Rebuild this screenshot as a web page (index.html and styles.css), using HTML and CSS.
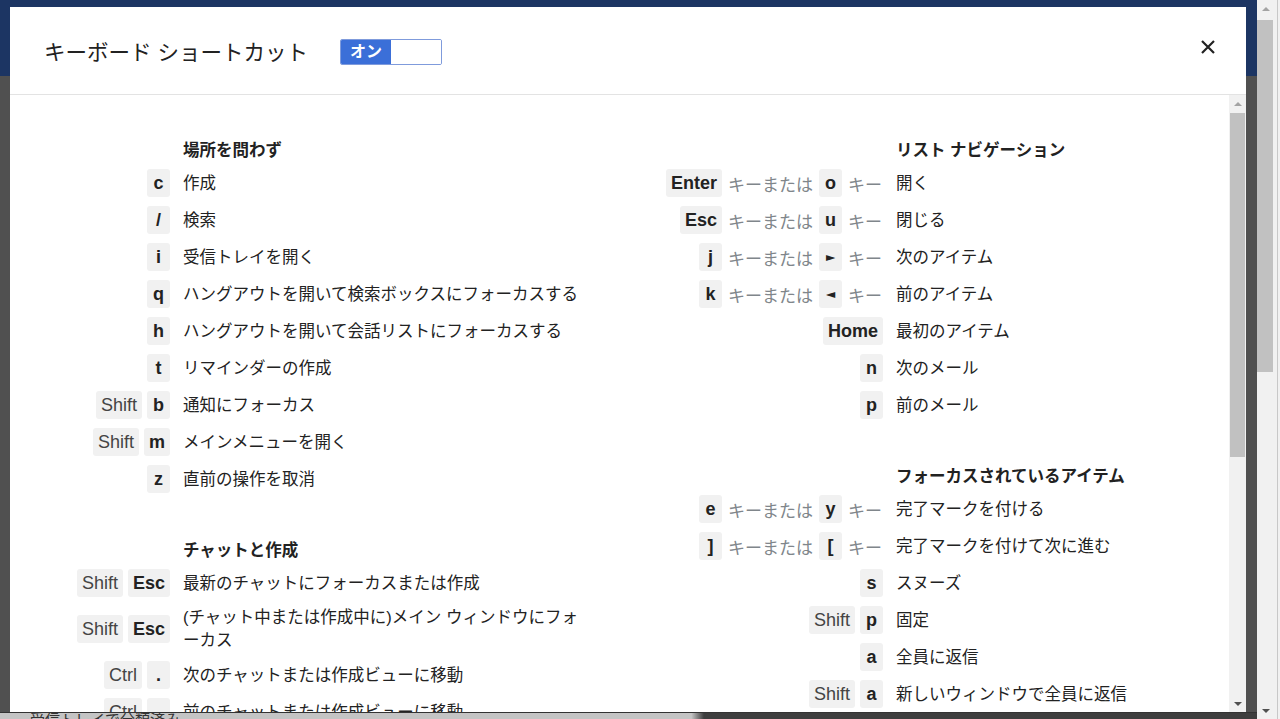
FILE: index.html
```html
<!DOCTYPE html>
<html lang="ja">
  <head>
    <meta charset="UTF-8" />
    <meta name="viewport" content="width=device-width, initial-scale=1.0" />
    <title>キーボード ショートカット</title>
    <link rel="stylesheet" href="styles.css">
  </head>
  <body>
    <!-- page behind the dialog -->
    <div class="page">
      <div class="page-top"></div>
      <div class="page-main"></div>
      <div class="page-foot"><span>受信トレイで分類済み</span></div>
    </div>
    <div class="scrollbar page-scroll">
      <div class="sb-btn"><span class="arrow-up"></span></div>
      <div class="sb-thumb page-thumb"></div>
      <div class="sb-track"></div>
      <div class="sb-btn"><span class="arrow-down"></span></div>
    </div>
    <div class="page-edge"></div>

    <div class="dialog">
      <div class="dialog-header">
        <h1>キーボード ショートカット</h1>
        <div class="toggle">
          <span class="toggle-on">オン</span>
          <span class="toggle-off"></span>
        </div>
        <button class="close" aria-label="閉じる">
          <svg width="16" height="16" viewBox="0 0 16 16">
            <path d="M2 2L14 14M14 2L2 14" stroke="#222" stroke-width="2.2" fill="none" />
          </svg>
        </button>
      </div>

      <div class="dialog-body">
        <div class="content">
          <!-- Left column -->
          <div class="column col-left">
            <div class="section">
              <h2>場所を問わず</h2>
              <div class="rows">
                <div class="keys"><kbd>c</kbd></div>
                <div class="desc">作成</div>
                <div class="keys"><kbd>/</kbd></div>
                <div class="desc">検索</div>
                <div class="keys"><kbd>i</kbd></div>
                <div class="desc">受信トレイを開く</div>
                <div class="keys"><kbd>q</kbd></div>
                <div class="desc">ハングアウトを開いて検索ボックスにフォーカスする</div>
                <div class="keys"><kbd>h</kbd></div>
                <div class="desc">ハングアウトを開いて会話リストにフォーカスする</div>
                <div class="keys"><kbd>t</kbd></div>
                <div class="desc">リマインダーの作成</div>
                <div class="keys"><kbd class="mod">Shift</kbd><kbd>b</kbd></div>
                <div class="desc">通知にフォーカス</div>
                <div class="keys"><kbd class="mod">Shift</kbd><kbd>m</kbd></div>
                <div class="desc">メインメニューを開く</div>
                <div class="keys"><kbd>z</kbd></div>
                <div class="desc">直前の操作を取消</div>
              </div>
            </div>

            <div class="section">
              <h2>チャットと作成</h2>
              <div class="rows">
                <div class="keys"><kbd class="mod">Shift</kbd><kbd>Esc</kbd></div>
                <div class="desc">最新のチャットにフォーカスまたは作成</div>
                <div class="keys"><kbd class="mod">Shift</kbd><kbd>Esc</kbd></div>
                <div class="desc">(チャット中または作成中に)メイン ウィンドウにフォーカス</div>
                <div class="keys"><kbd class="mod">Ctrl</kbd><kbd>.</kbd></div>
                <div class="desc">次のチャットまたは作成ビューに移動</div>
                <div class="keys"><kbd class="mod">Ctrl</kbd><kbd>,</kbd></div>
                <div class="desc">前のチャットまたは作成ビューに移動</div>
              </div>
            </div>
          </div>

          <!-- Right column -->
          <div class="column col-right">
            <div class="section">
              <h2>リスト ナビゲーション</h2>
              <div class="rows">
                <div class="keys"><kbd>Enter</kbd><span class="or">キーまたは</span><kbd>o</kbd><span class="or">キー</span></div>
                <div class="desc">開く</div>
                <div class="keys"><kbd>Esc</kbd><span class="or">キーまたは</span><kbd>u</kbd><span class="or">キー</span></div>
                <div class="desc">閉じる</div>
                <div class="keys"><kbd>j</kbd><span class="or">キーまたは</span><kbd class="arrow">&#9658;</kbd><span class="or">キー</span></div>
                <div class="desc">次のアイテム</div>
                <div class="keys"><kbd>k</kbd><span class="or">キーまたは</span><kbd class="arrow">&#9668;</kbd><span class="or">キー</span></div>
                <div class="desc">前のアイテム</div>
                <div class="keys"><kbd>Home</kbd></div>
                <div class="desc">最初のアイテム</div>
                <div class="keys"><kbd>n</kbd></div>
                <div class="desc">次のメール</div>
                <div class="keys"><kbd>p</kbd></div>
                <div class="desc">前のメール</div>
              </div>
            </div>

            <div class="section">
              <h2>フォーカスされているアイテム</h2>
              <div class="rows">
                <div class="keys"><kbd>e</kbd><span class="or">キーまたは</span><kbd>y</kbd><span class="or">キー</span></div>
                <div class="desc">完了マークを付ける</div>
                <div class="keys"><kbd>]</kbd><span class="or">キーまたは</span><kbd>[</kbd><span class="or">キー</span></div>
                <div class="desc">完了マークを付けて次に進む</div>
                <div class="keys"><kbd>s</kbd></div>
                <div class="desc">スヌーズ</div>
                <div class="keys"><kbd class="mod">Shift</kbd><kbd>p</kbd></div>
                <div class="desc">固定</div>
                <div class="keys"><kbd>a</kbd></div>
                <div class="desc">全員に返信</div>
                <div class="keys"><kbd class="mod">Shift</kbd><kbd>a</kbd></div>
                <div class="desc">新しいウィンドウで全員に返信</div>
              </div>
            </div>
          </div>
        </div>

        <div class="scrollbar dialog-scroll">
          <div class="sb-btn"><span class="arrow-up"></span></div>
          <div class="sb-thumb dialog-thumb"></div>
          <div class="sb-track"></div>
          <div class="sb-btn"><span class="arrow-down"></span></div>
        </div>
      </div>
    </div>
  </body>
</html>
```

FILE: styles.css
```css
* {
  margin: 0;
  padding: 0;
  box-sizing: border-box;
}

body {
  display: flex;
  height: 719px;
  overflow: hidden;
  background: #505050;
  font-family: "Liberation Sans", "Noto Sans CJK JP", sans-serif;
  color: #222;
}

/* page behind the overlay */
.page {
  flex: 1;
  display: flex;
  flex-direction: column;
}

.page-top {
  height: 76px;
  background: #1c3563;
}

.page-main {
  flex: 1;
  background: #505050;
}

.page-foot {
  height: 7px;
  overflow: hidden;
  background: linear-gradient(to right, #c4c4c4 0, #c4c4c4 55%, #3e3e3e 56%);
  border-top: 1px solid #333;
  font-size: 15px;
  line-height: 14px;
  color: #333;
  padding-left: 30px;
}

.page-edge {
  width: 6px;
  background: #f1f1f1;
  border-left: 3px solid #f1f1f1;
  box-shadow: inset 1px 0 0 #c8c8c8;
}

/* scrollbars */
.scrollbar {
  width: 17px;
  display: flex;
  flex-direction: column;
  background: #f1f1f1;
}

.sb-btn {
  height: 17px;
  display: flex;
  align-items: center;
  justify-content: center;
}

.sb-thumb {
  background: #c1c1c1;
}

.sb-track {
  flex: 1;
}

.arrow-up {
  width: 0;
  height: 0;
  border-left: 4px solid transparent;
  border-right: 4px solid transparent;
  border-bottom: 4px solid #a3a3a3;
}

.arrow-down {
  width: 0;
  height: 0;
  border-left: 4px solid transparent;
  border-right: 4px solid transparent;
  border-top: 4px solid #505050;
}

.page-thumb {
  height: 352px;
  margin: 3px 1px 0 0;
}

.dialog-thumb {
  height: 344px;
  margin: 1px 1px 0 1px;
}

/* dialog */
.dialog {
  position: absolute;
  left: 10px;
  top: 7px;
  width: 1236px;
  height: 705px;
  background: #fff;
  display: flex;
  flex-direction: column;
}

.dialog-header {
  height: 88px;
  flex-shrink: 0;
  display: flex;
  align-items: center;
  padding: 0 30px 0 34px;
  border-bottom: 1px solid #e3e3e3;
}

.dialog-header h1 {
  font-size: 21.5px;
  font-weight: normal;
  color: #222;
}

.toggle {
  display: flex;
  height: 26px;
  margin: 3px 0 0 32px;
  border: 1px solid #7f9bdc;
  border-radius: 2px;
  overflow: hidden;
}

.toggle-on {
  width: 50px;
  background: #3b6fd8;
  color: #fff;
  font-size: 16px;
  font-weight: bold;
  line-height: 24px;
  text-align: center;
}

.toggle-off {
  width: 50px;
  background: #fff;
}

.close {
  margin-left: auto;
  margin-bottom: 7px;
  width: 16px;
  height: 16px;
  border: none;
  background: none;
  cursor: pointer;
  display: flex;
}

.dialog-body {
  flex: 1;
  display: flex;
  min-height: 0;
}

.content {
  flex: 1;
  display: flex;
  overflow: hidden;
  padding: 44px 0 0 30px;
}

.col-left {
  width: 600px;
}

.col-right {
  flex: 1;
}

.section + .section {
  margin-top: 46px;
}

.section h2 {
  font-size: 16.5px;
  font-weight: bold;
  line-height: 23px;
  margin-bottom: 7px;
}

.col-left h2 {
  margin-left: 143px;
}

.col-right h2 {
  margin-left: 256px;
}

.rows {
  display: grid;
  column-gap: 13px;
  row-gap: 9px;
  align-items: center;
}

.col-left .rows {
  grid-template-columns: 130px 405px;
}

.col-right .rows {
  grid-template-columns: 243px 1fr;
}

.keys {
  display: flex;
  justify-content: flex-end;
  align-items: center;
  gap: 5px;
}

kbd {
  display: inline-flex;
  align-items: center;
  justify-content: center;
  height: 28px;
  min-width: 23px;
  padding: 0 5px;
  background: #f1f1f1;
  border-radius: 3px;
  font-family: "Liberation Sans", sans-serif;
  font-size: 18px;
  font-weight: bold;
  color: #222;
}

kbd.mod {
  font-weight: normal;
  color: #444;
}

kbd.arrow {
  font-family: "DejaVu Sans", sans-serif;
  font-size: 12px;
}

.or {
  font-size: 17px;
  color: #80868b;
  margin: 0 1px;
}

.desc {
  font-size: 16.5px;
  line-height: 23px;
  color: #222;
  line-break: loose;
}
```
